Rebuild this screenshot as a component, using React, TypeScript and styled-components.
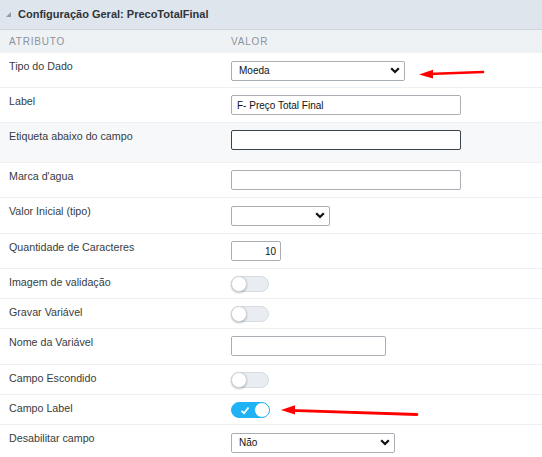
import React from "react";
import styled, { createGlobalStyle } from "styled-components";

const Global = createGlobalStyle`
  html, body { margin: 0; padding: 0; background: #ffffff; }
  body { font-family: "Liberation Sans", Arial, Helvetica, sans-serif; color: #333; }
  * { box-sizing: border-box; }
`;

const Panel = styled.div`
  position: relative;
  width: 542px;
  height: 457px;
  overflow: hidden;
  background: #fff;
`;

const Header = styled.div`
  height: 30px;
  display: flex;
  align-items: center;
  gap: 7px;
  padding: 0 0 1px 6px;
  background: #dfe5ec;
  border-bottom: 1px solid #ccd5de;
`;

const Title = styled.span`
  font-size: 11px;
  font-weight: bold;
  color: #2f3439;
`;

const ColHead = styled.div`
  height: 23px;
  display: grid;
  grid-template-columns: 222px 1fr;
  align-items: center;
  padding: 0 9px;
  background: #eef2f5;
`;

const ColLabel = styled.span`
  font-size: 10px;
  letter-spacing: 0.8px;
  text-transform: uppercase;
  color: #8b939c;
`;

const Row = styled.div<{ $pb?: number; $shaded?: boolean }>`
  display: grid;
  grid-template-columns: 222px 1fr;
  align-items: start;
  padding: 7px 9px ${(p) => p.$pb ?? 7}px 9px;
  border-bottom: 1px solid #edf0f3;
  background: ${(p) => (p.$shaded ? "#f7f8fa" : "#ffffff")};
`;

const Label = styled.span`
  font-size: 10.7px;
  line-height: 13px;
  color: #383c40;
`;

const Value = styled.div`
  display: flex;
  align-items: center;
  min-height: 16px;
`;

const TextInput = styled.input<{ $w: number; $focus?: boolean; $right?: boolean }>`
  width: ${(p) => p.$w}px;
  height: 20px;
  margin: 0;
  padding: 0 ${(p) => (p.$right ? 4 : 5)}px;
  border: 1px solid ${(p) => (p.$focus ? "#3b434b" : "#a9aeb4")};
  border-radius: 2px;
  background: #fff;
  font-family: "Liberation Sans", Arial, sans-serif;
  font-size: 10px;
  color: #111;
  text-align: ${(p) => (p.$right ? "right" : "left")};
  outline: none;
`;

const SelectWrap = styled.div<{ $w: number }>`
  position: relative;
  width: ${(p) => p.$w}px;
  height: 20px;
`;

const NativeSelect = styled.select`
  appearance: none;
  -webkit-appearance: none;
  width: 100%;
  height: 20px;
  margin: 0;
  padding: 0 18px 0 7px;
  border: 1px solid #a9aeb4;
  border-radius: 2px;
  background: #fff;
  font-family: "Liberation Sans", Arial, sans-serif;
  font-size: 10px;
  color: #111;
  outline: none;
`;

const Chevron = styled.svg`
  position: absolute;
  right: 5px;
  top: 7px;
  pointer-events: none;
`;

const Track = styled.span<{ $on?: boolean }>`
  position: relative;
  display: inline-flex;
  align-items: center;
  width: 38px;
  height: 16px;
  border-radius: 8px;
  background: ${(p) => (p.$on ? "#1fb3f6" : "#e9edf1")};
  border: 1px solid ${(p) => (p.$on ? "#1fb3f6" : "#d6dce2")};
`;

const Knob = styled.span<{ $on?: boolean }>`
  position: absolute;
  top: -1px;
  left: ${(p) => (p.$on ? "22px" : "-1px")};
  width: 16px;
  height: 16px;
  border-radius: 50%;
  background: #fff;
  border: 1px solid ${(p) => (p.$on ? "#1fb3f6" : "#d0d5da")};
  box-shadow: ${(p) => (p.$on ? "none" : "0 1px 2px rgba(0,0,0,0.25)")};
`;

const Check = styled.svg`
  position: absolute;
  left: 8px;
  top: 3px;
`;

const Overlay = styled.svg`
  position: absolute;
  left: 0;
  top: 0;
  pointer-events: none;
`;

function Select({ w, value }: { w: number; value: string }) {
  return (
    <SelectWrap $w={w}>
      <NativeSelect defaultValue={value}>
        <option value={value}>{value}</option>
      </NativeSelect>
      <Chevron width="10" height="7" viewBox="0 0 10 7">
        <path d="M1.2 1.2 L5 5 L8.8 1.2" fill="none" stroke="#111" strokeWidth="2.2" />
      </Chevron>
    </SelectWrap>
  );
}

function Toggle({ on }: { on?: boolean }) {
  return (
    <Track $on={on}>
      {on && (
        <Check width="10" height="9" viewBox="0 0 10 9">
          <path d="M1.5 4.8 L4 7.2 L8.5 1.5" fill="none" stroke="#fff" strokeWidth="1.8" />
        </Check>
      )}
      <Knob $on={on} />
    </Track>
  );
}

export default function App() {
  return (
    <Panel>
      <Global />
      <Header>
        <svg width="5" height="5" viewBox="0 0 5 5">
          <polygon points="5,0 5,5 0,5" fill="#8f99a3" />
        </svg>
        <Title>Configuração Geral: PrecoTotalFinal</Title>
      </Header>
      <ColHead>
        <ColLabel>Atributo</ColLabel>
        <ColLabel>Valor</ColLabel>
      </ColHead>

      <Row>
        <Label>Tipo do Dado</Label>
        <Value><Select w={174} value="Moeda" /></Value>
      </Row>
      <Row>
        <Label>Label</Label>
        <Value><TextInput $w={230} defaultValue="F- Preço Total Final" /></Value>
      </Row>
      <Row $pb={12} $shaded>
        <Label>Etiqueta abaixo do campo</Label>
        <Value><TextInput $w={230} $focus defaultValue="" /></Value>
      </Row>
      <Row>
        <Label>Marca d'agua</Label>
        <Value><TextInput $w={230} defaultValue="" /></Value>
      </Row>
      <Row $pb={8}>
        <Label>Valor Inicial (tipo)</Label>
        <Value><Select w={99} value="" /></Value>
      </Row>
      <Row>
        <Label>Quantidade de Caracteres</Label>
        <Value><TextInput $w={50} $right defaultValue="10" /></Value>
      </Row>
      <Row $pb={6}>
        <Label>Imagem de validação</Label>
        <Value><Toggle /></Value>
      </Row>
      <Row $pb={6}>
        <Label>Gravar Variável</Label>
        <Value><Toggle /></Value>
      </Row>
      <Row $pb={8}>
        <Label>Nome da Variável</Label>
        <Value><TextInput $w={155} defaultValue="" /></Value>
      </Row>
      <Row $pb={6}>
        <Label>Campo Escondido</Label>
        <Value><Toggle /></Value>
      </Row>
      <Row $pb={6}>
        <Label>Campo Label</Label>
        <Value><Toggle on /></Value>
      </Row>
      <Row>
        <Label>Desabilitar campo</Label>
        <Value><Select w={164} value="Não" /></Value>
      </Row>

      <Overlay width="542" height="457" viewBox="0 0 542 457">
        <line x1="483" y1="72" x2="428" y2="74" stroke="#ff0000" strokeWidth="2.6" strokeLinecap="round" />
        <polygon points="419,74.4 433,69.8 433,78.6" fill="#ff0000" />
        <line x1="417" y1="414.5" x2="290" y2="410.3" stroke="#ff0000" strokeWidth="2.8" strokeLinecap="round" />
        <polygon points="281,410 295,405.3 295,414.6" fill="#ff0000" />
      </Overlay>
    </Panel>
  );
}
